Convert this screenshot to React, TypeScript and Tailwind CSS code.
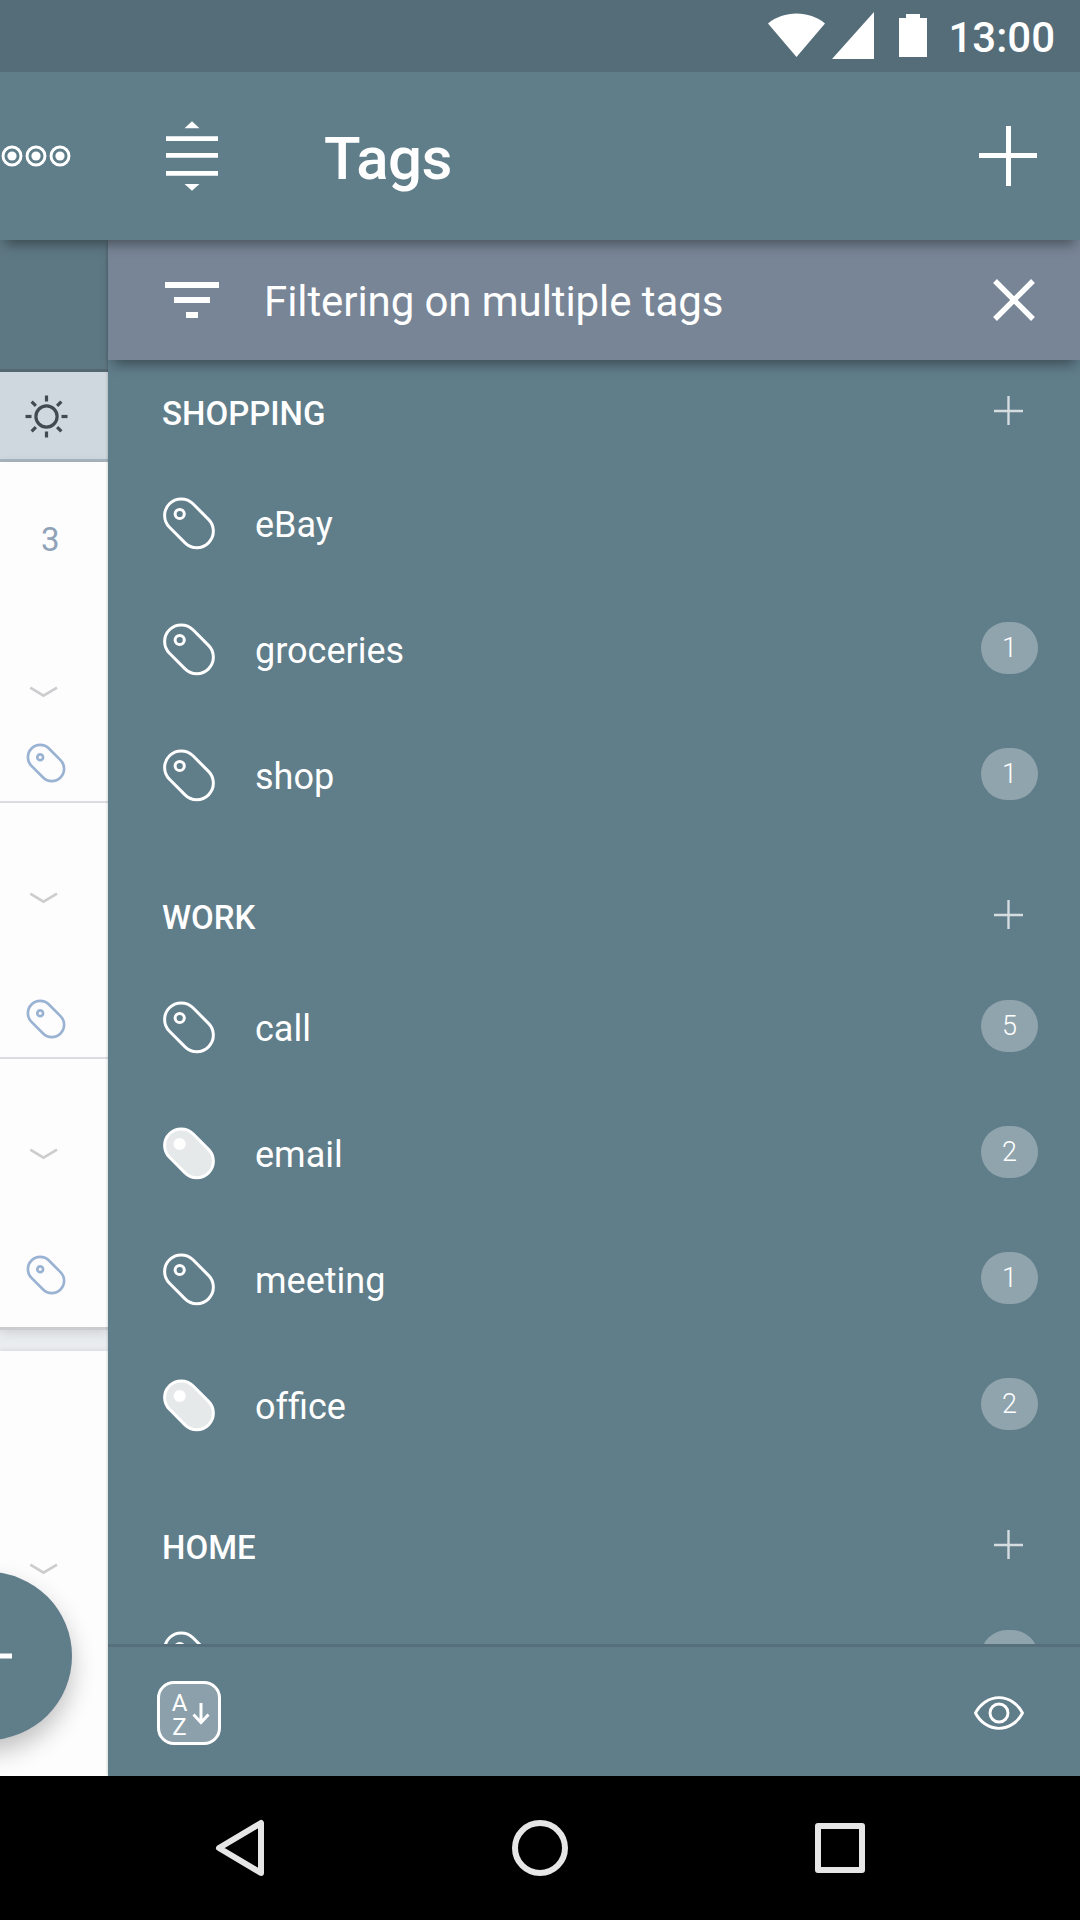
import React from "react";

type TagItem = { name: string[]; count?: string; selected?: boolean };
type TagGroup = { title: string; tags: TagItem[] };

const groups: TagGroup[] = [
  {
    title: "SHOPPING",
    tags: [{ name: ["eBay"] }, { name: ["groceries"], count: "1" }, { name: ["shop"], count: "1" }],
  },
  {
    title: "WORK",
    tags: [
      { name: ["call"], count: "5" },
      { name: ["email"], count: "2", selected: true },
      { name: ["meeting"], count: "1" },
      // Split so that the two f's are not joined into a single ffi ligature.
      { name: ["of", "fice"], count: "2", selected: true },
    ],
  },
  { title: "HOME", tags: [{ name: [], count: "" }] },
];

function TagIcon({ selected }: { selected?: boolean }) {
  return (
    <svg className="size-[54px] shrink-0" viewBox="-27 -27.3 54 54" fill="none" stroke="#fff" strokeWidth="3">
      <rect x="-27.6" y="-16.6" width="55.2" height="33.2" rx="16.6" transform="rotate(45)" fill={selected ? "#e6e9ea" : "none"} />
      <circle cx="-9.3" cy="-9.3" r="4.6" fill={selected ? "#fff" : "none"} />
    </svg>
  );
}

function SmallTagIcon() {
  return (
    <svg className="size-[40px] shrink-0" viewBox="-20 -20 40 40" fill="none" stroke="#9ab3d3" strokeWidth="2.7">
      <rect x="-20.5" y="-12.3" width="41" height="24.6" rx="12.3" transform="rotate(45)" />
      <circle cx="-5.8" cy="-5.8" r="2.9" />
    </svg>
  );
}

function Chevron() {
  return (
    <svg className="ml-[29px] h-[12px] w-[30px] shrink-0" viewBox="0 0 30 12" fill="none" stroke="#cdcdcf" strokeWidth="2.8">
      <path d="M1.3 1.6 14.5 9.6 28 1.6" />
    </svg>
  );
}

function StatusBar() {
  return (
    <div className="relative z-30 flex h-[72px] shrink-0 items-center justify-end bg-[#546d78] pr-[25px]">
      <svg className="h-[72px] w-[160px]" viewBox="768 0 160 72" fill="#fff">
        <path d="M796.5 57 768 23.5C776 17 786 13.6 796.5 13.6S817 17 825 23.5Z" />
        <path d="M832 59H874V12Z" />
        <path d="M899 57V18H906V14H920V18H927V57Z" />
      </svg>
      <span className="ml-[20px] pt-[3px] text-[42px] font-medium">13:00</span>
    </div>
  );
}

function Toolbar() {
  return (
    <header className="relative z-20 flex h-[168px] shrink-0 items-center bg-[#607d8a] shadow-[0_9px_12px_-5px_rgba(0,0,0,0.4)]">
      <svg className="h-[24px] w-[72px]" viewBox="0 -12 72 24" fill="none" stroke="#fff" strokeWidth="2.9">
        {[12, 36, 60].map((x) => (
          <g key={x}>
            <circle cx={x} cy="0" r="9" />
            <circle cx={x} cy="0" r="4.6" fill="#fff" stroke="none" />
          </g>
        ))}
      </svg>
      <svg className="ml-[94px] h-[72px] w-[52px]" viewBox="166 120 52 72" fill="#fff">
        <path d="M192 121.3 199.5 128.3H184.5ZM192 190.8 199.5 184H184.5Z" />
        <path d="M166 136.3h52v4.8h-52ZM166 153h52v4.8h-52ZM166 171h52v4.8h-52Z" />
      </svg>
      <h1 className="ml-[106px] pt-[6px] text-[60px] font-medium tracking-[-0.5px]">Tags</h1>
      <svg className="mr-[42px] ml-auto h-[62px] w-[60px]" viewBox="978 125 60 62" fill="#fff">
        <path d="M1006 126h5v60h-5ZM979 153h58v5h-58Z" />
      </svg>
    </header>
  );
}

function NotesPane() {
  return (
    <aside className="relative flex w-[108px] shrink-0 flex-col overflow-hidden bg-[#e9edf0]">
      <div className="z-10 h-[132px] shrink-0 bg-[#5e7883] shadow-[0_-3px_0_#546872_inset]" />
      <div className="flex h-[90px] shrink-0 items-center border-b-[3px] border-[#a9b6c0] bg-[#cfd8de] pt-[2px] pl-[24px]">
        <svg className="size-[45px]" viewBox="-22.5 -22.5 45 45" fill="none" stroke="#414b53" strokeWidth="3.2">
          <circle r="10.6" />
          {[0, 45, 90, 135, 180, 225, 270, 315].map((a) => (
            <path key={a} d="M15 0H21" transform={`rotate(${a})`} />
          ))}
        </svg>
      </div>
      <div className="relative z-10 shrink-0 bg-[#fdfdfe] shadow-[0_3px_0_#cbcccf,0_4px_12px_rgba(0,0,0,0.16)]">
        <div className="h-[341px] border-b-2 border-[#dcdce1]">
          <div className="h-[224px] pt-[58px] pl-[41px] text-[33px] leading-[40px] text-[#8fa2b8]">3</div>
          <Chevron />
          <div className="mt-[45px] ml-[26px] flex"><SmallTagIcon /></div>
        </div>
        <div className="h-[256px] border-b-2 border-[#dcdce1] pt-[89px]">
          <Chevron />
          <div className="mt-[95px] ml-[26px] flex"><SmallTagIcon /></div>
        </div>
        <div className="h-[268px] pt-[89px]">
          <Chevron />
          <div className="mt-[95px] ml-[26px] flex"><SmallTagIcon /></div>
        </div>
      </div>
      <div className="mt-[24px] flex-1 bg-[#fdfdfe] pt-[212px] shadow-[0_0_5px_rgba(0,0,0,0.12)]">
        <Chevron />
      </div>
      <button className="absolute bottom-[36px] left-[-96px] z-20 flex size-[168px] items-center justify-center rounded-full bg-[#607d8a] shadow-[0_12px_24px_rgba(0,0,0,0.24)]">
        <svg className="size-[48px]" viewBox="0 0 48 48" fill="#fff">
          <path d="M21.5 0h5v48h-5ZM0 21.5h48v5H0Z" />
        </svg>
      </button>
    </aside>
  );
}

function GroupSection({ group }: { group: TagGroup }) {
  return (
    <section className="pb-[26px]">
      <div className="flex h-[100px] items-center pr-[57px] pl-[54px]">
        <h2 className="pt-[6px] text-[33px] leading-none font-medium">{group.title}</h2>
        <svg className="ml-auto size-[29px]" viewBox="0 0 29 29" stroke="#d5dde1" strokeWidth="2.4">
          <path d="M14.5 0V29M0 15H29" />
        </svg>
      </div>
      {group.tags.map((tag, i) => (
        <div key={i} className="flex h-[126px] items-center pr-[42px] pl-[54px]">
          <TagIcon selected={tag.selected} />
          <span className="ml-[39px] flex pt-[3px] text-[36px]">
            {tag.name.map((part) => (
              <span key={part}>{part}</span>
            ))}
          </span>
          {tag.count !== undefined && (
            <span className="ml-auto flex h-[52px] w-[57px] -translate-y-px items-center justify-center rounded-[26px] bg-[#90a4ad] text-[27px] font-light">
              {tag.count}
            </span>
          )}
        </div>
      ))}
    </section>
  );
}

function TagsDrawer() {
  return (
    <main className="z-10 flex min-w-0 flex-1 flex-col bg-[#607d8a] shadow-[0_0_3px_rgba(0,0,0,0.25)]">
      <div className="relative z-10 flex h-[120px] shrink-0 items-center bg-[#788596] pr-[45px] pl-[57px] shadow-[0_9px_12px_-5px_rgba(0,0,0,0.4)]">
        <svg className="h-[36px] w-[54px]" viewBox="0 0 54 36" fill="#fff">
          <path d="M0 0h54v6H0ZM9 15h36v6H9ZM21 30h12v6H21Z" />
        </svg>
        <span className="ml-[45px] pt-[3px] text-[42px] tracking-[-0.08px]">Filtering on multiple tags</span>
        <svg className="ml-auto size-[42px]" viewBox="0 0 42 42" stroke="#fff" strokeWidth="5.4">
          <path d="M2 2 40 40M40 2 2 40" />
        </svg>
      </div>
      <div className="min-h-0 flex-1 overflow-hidden">
        {groups.map((g) => (
          <GroupSection key={g.title} group={g} />
        ))}
      </div>
      <footer className="flex h-[132px] shrink-0 items-center border-t-[3px] border-[#566f7b] pt-[3px] pr-[55px] pl-[49px]">
        <button className="flex size-[64px] items-center rounded-[17px] border-[3px] border-white bg-[#8ba0aa] pl-[11px]">
          <span className="flex w-[17px] flex-col items-center pt-[4px] text-[24px] leading-[24px]">
            <span>A</span>
            <span>Z</span>
          </span>
          <svg className="mt-[2px] ml-[4px] h-[22px] w-[18px]" viewBox="0 0 18 22" fill="none" stroke="#fff" strokeWidth="3">
            <path d="M9 0V19.5M1.5 11.5 9 19.5 16.5 11.5" />
          </svg>
        </button>
        <svg className="ml-auto h-[36px] w-[52px]" viewBox="-26 -18 52 36" fill="none" stroke="#fff" strokeWidth="2.9" strokeLinejoin="round">
          <path d="M-23.5 0C-19 -9 -10 -15.4 0 -15.4S19 -9 23.5 0C19 9 10 15.4 0 15.4S-19 9 -23.5 0Z" />
          <circle r="9" />
        </svg>
      </footer>
    </main>
  );
}

function NavigationBar() {
  return (
    <nav className="z-20 flex h-[144px] shrink-0 items-center justify-between bg-black px-[210px]">
      <svg className="size-[60px]" viewBox="0 0 60 60" fill="none" stroke="#e6e6e6" strokeWidth="6" strokeLinejoin="round">
        <path d="M51 5V55L9 30Z" />
      </svg>
      <svg className="size-[60px]" viewBox="0 0 60 60" fill="none" stroke="#e6e6e6" strokeWidth="6">
        <circle cx="30" cy="30" r="25" />
      </svg>
      <svg className="size-[60px]" viewBox="0 0 60 60" fill="none" stroke="#e6e6e6" strokeWidth="6" strokeLinejoin="round">
        <rect x="8" y="8" width="44" height="44" />
      </svg>
    </nav>
  );
}

export default function App() {
  return (
    <div className="flex h-[1920px] w-[1080px] flex-col overflow-hidden bg-[#607d8a] font-['Roboto',sans-serif] text-white">
      <StatusBar />
      <Toolbar />
      <div className="flex min-h-0 flex-1">
        <NotesPane />
        <TagsDrawer />
      </div>
      <NavigationBar />
    </div>
  );
}
